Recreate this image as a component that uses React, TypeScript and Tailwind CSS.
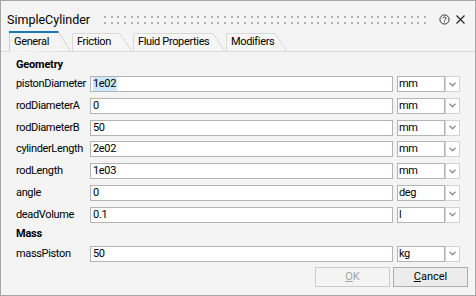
import React from "react";

const rows: [string, string, string][] = [
  ["pistonDiameter", "1e02", "mm"],
  ["rodDiameterA", "0", "mm"],
  ["rodDiameterB", "50", "mm"],
  ["cylinderLength", "2e02", "mm"],
  ["rodLength", "1e03", "mm"],
  ["angle", "0", "deg"],
  ["deadVolume", "0.1", "l"],
];

function Chevron() {
  return (
    <svg width="7" height="5" viewBox="0 0 7 5">
      <path d="M0.5 0.8 L3.5 3.8 L6.5 0.8" fill="none" stroke="#8c8c8c" strokeWidth="1.3" />
    </svg>
  );
}

function Row({ label, value, unit, selected }: { label: string; value: string; unit: string; selected?: boolean }) {
  return (
    <div className="flex items-center h-[16px]">
      <div className="w-[74px] leading-[14px] whitespace-nowrap">{label}</div>
      <div className="w-[303px] h-[16px] border border-[#b4b4b4] bg-white flex items-center pl-[2px] leading-[14px]">
        {selected ? <span className="bg-[#cce8ff] pr-[1px]">{value}</span> : <span>{value}</span>}
      </div>
      <div className="ml-[4px] w-[48px] h-[16px] border border-[#b4b4b4] bg-white flex items-center pl-[1px] leading-[14px]">
        {unit}
      </div>
      <div className="w-[15px] h-[16px] border border-[#d2d2d2] bg-white flex items-center justify-center">
        <Chevron />
      </div>
    </div>
  );
}

function Tab({ label, width, active }: { label: string; width: number; active?: boolean }) {
  const h = active ? 21 : 18;
  const slant = active ? 13 : 12;
  return (
    <div className="relative shrink-0" style={{ width, height: h }}>
      <svg className="absolute left-0 top-0" width={width} height={h} viewBox={`0 0 ${width} ${h}`}>
        <path
          d={`M0.5 ${h} L0.5 0.5 L${width - slant} 0.5 L${width - 0.5} ${active ? h - 1 : h}`}
          fill={active ? "#f4f4f4" : "#f6f6f6"}
          stroke={active ? "#cfcfcf" : "#d9d9d9"}
          strokeWidth="1"
        />
        {active && <line x1="0" y1="1" x2={width - slant + 0.5} y2="1" stroke="#1e78b4" strokeWidth="2" />}
      </svg>
      <div className={`relative pl-[5px] leading-[13px] whitespace-nowrap ${active ? "pt-[4px]" : "pt-[2px]"}`}>{label}</div>
    </div>
  );
}

const gripXs = Array.from({ length: 49 }, (_, i) => Math.round(i * 6.67));

export default function App() {
  return (
    <div className="w-[476px] h-[296px] bg-[#f4f4f4] border border-[#a6a6a6] flex flex-col font-['Roboto',sans-serif] text-[11px] text-black tracking-[-0.35px] overflow-hidden">
      {/* Title bar */}
      <div className="h-[30px] flex items-start shrink-0">
        <div className="pl-[6px] pt-[11px] leading-[16px] text-[12.5px] tracking-normal">SimpleCylinder</div>
        <svg className="ml-[14px] mt-[14px]" width="326" height="10">
          {gripXs.map((x) => (
            <g key={x}>
              <rect x={x} y="1" width="2" height="2" fill="#b0b0b0" />
              <rect x={x} y="7" width="2" height="2" fill="#b0b0b0" />
            </g>
          ))}
        </svg>
        <svg className="ml-[9px] mt-[13px]" width="11" height="11" viewBox="0 0 11 11">
          <circle cx="5.5" cy="5.5" r="4.6" fill="none" stroke="#333" strokeWidth="1" />
          <path d="M3.9 4.3 C3.9 2.6 7.1 2.6 7.1 4.3 C7.1 5.4 5.5 5.4 5.5 6.6" fill="none" stroke="#333" strokeWidth="1" />
          <rect x="5" y="7.5" width="1" height="1" fill="#333" />
        </svg>
        <svg className="ml-[6px] mt-[14px]" width="9" height="9" viewBox="0 0 9 9">
          <path d="M0.5 0.5 L8.5 8.5 M8.5 0.5 L0.5 8.5" stroke="#222" strokeWidth="1.1" />
        </svg>
      </div>

      {/* Tabs */}
      <div className="h-[21px] shrink-0 flex items-end gap-[1px] pl-[8px] border-b border-[#dadada] relative">
        <div className="mb-[-1px]">
          <Tab label="General" width={62} active />
        </div>
        <Tab label="Friction" width={60} />
        <Tab label="Fluid Properties" width={92} />
        <Tab label="Modifiers" width={61} />
      </div>

      {/* Content */}
      <div className="pl-[15px] flex flex-col">
        <div className="h-[24px] pt-[6px] font-bold leading-[14px] tracking-[-0.2px]">Geometry</div>
        <div className="flex flex-col gap-[5.83px]">
          {rows.map(([l, v, u], i) => (
            <Row key={l} label={l} value={v} unit={u} selected={i === 0} />
          ))}
        </div>
        <div className="h-[23px] flex items-center font-bold leading-[14px] tracking-[-0.2px]">Mass</div>
        <Row label="massPiston" value="50" unit="kg" />
      </div>

      {/* Buttons */}
      <div className="flex justify-end gap-[3px] pr-[7px] mt-[5px]">
        <div className="w-[75px] h-[20px] border border-[#cccccc] bg-[#f4f4f4] text-[#a3a3a3] flex items-center justify-center leading-[14px] tracking-normal">
          <span><span className="underline">O</span>K</span>
        </div>
        <div className="w-[75px] h-[20px] border border-[#adadad] bg-[#ececec] flex items-center justify-center leading-[14px] tracking-normal">
          <span><span className="underline">C</span>ancel</span>
        </div>
      </div>
    </div>
  );
}
